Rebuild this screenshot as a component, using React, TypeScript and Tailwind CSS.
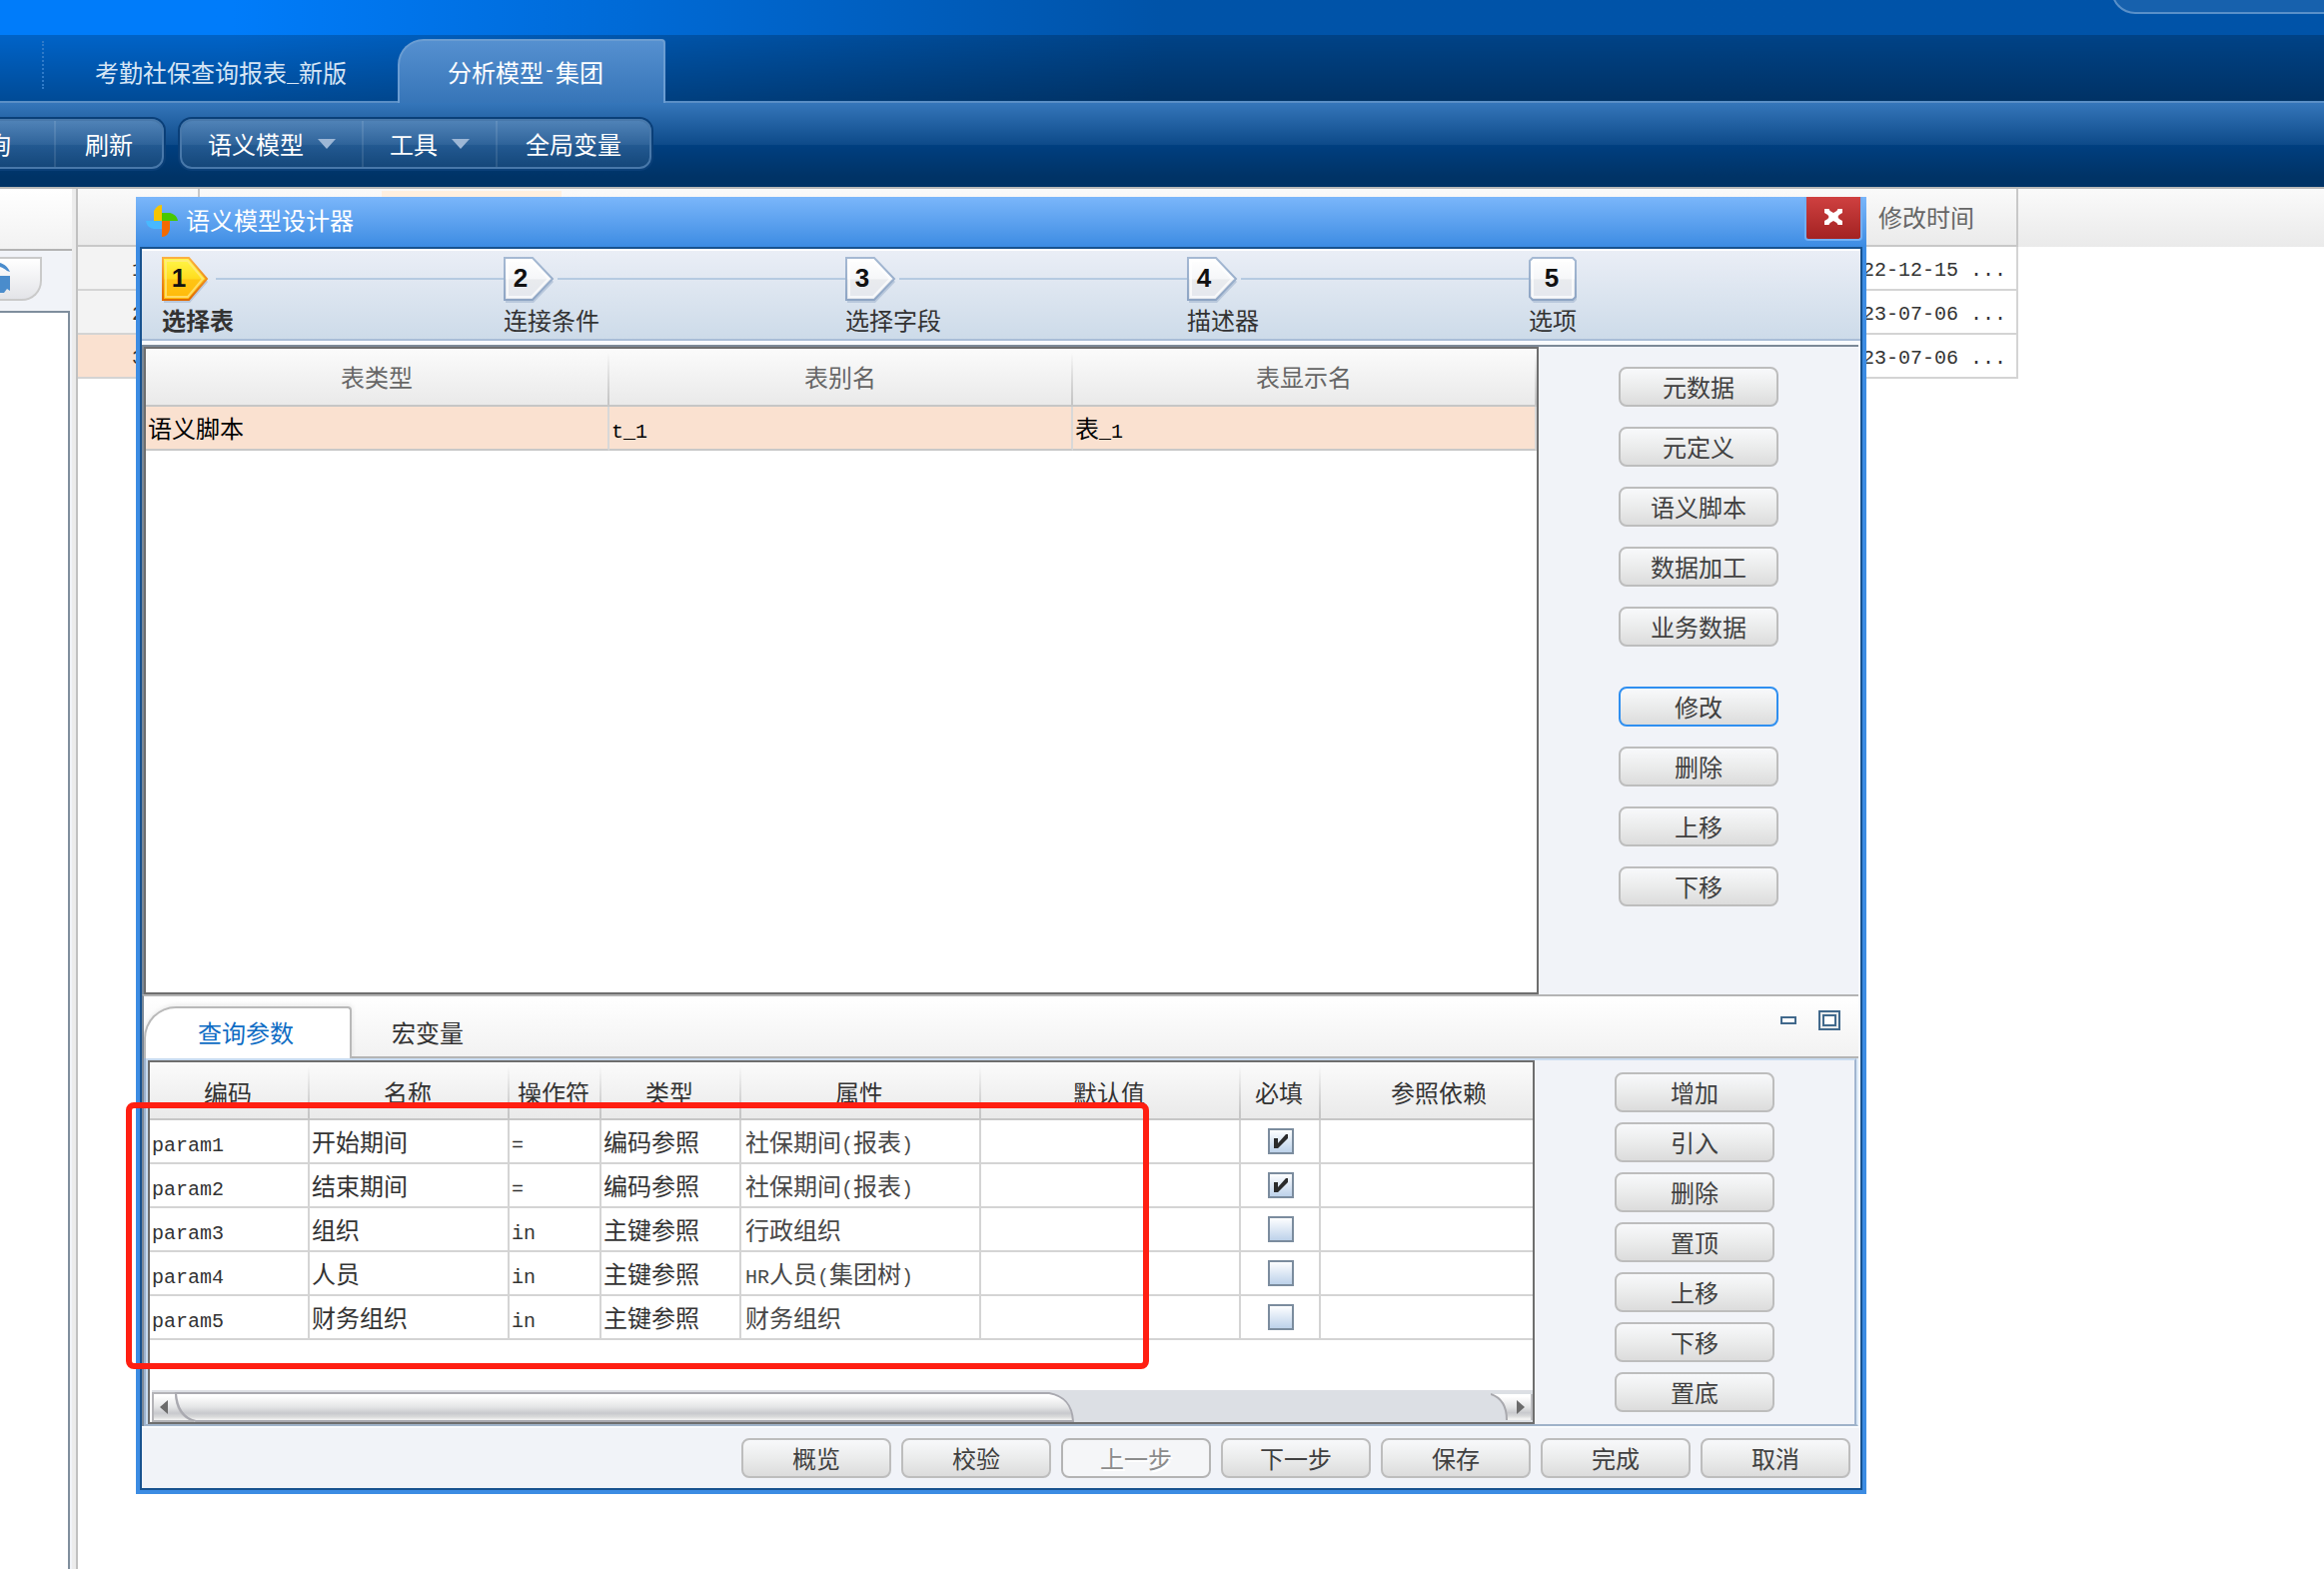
import { clsx } from "clsx";

type Param = {
  code: string;
  name: string;
  op: string;
  type: string;
  prop: string;
  required: boolean;
};

const params: Param[] = [
  { code: "param1", name: "开始期间", op: "=", type: "编码参照", prop: "社保期间(报表)", required: true },
  { code: "param2", name: "结束期间", op: "=", type: "编码参照", prop: "社保期间(报表)", required: true },
  { code: "param3", name: "组织", op: "in", type: "主键参照", prop: "行政组织", required: false },
  { code: "param4", name: "人员", op: "in", type: "主键参照", prop: "HR人员(集团树)", required: false },
  { code: "param5", name: "财务组织", op: "in", type: "主键参照", prop: "财务组织", required: false },
];

const paramColumns = [
  { label: "编码", width: "w-[160px]" },
  { label: "名称", width: "w-[200px]" },
  { label: "操作符", width: "w-[92px]" },
  { label: "类型", width: "w-[140px]" },
  { label: "属性", width: "w-[240px]" },
  { label: "默认值", width: "w-[260px]" },
  { label: "必填", width: "w-[80px]" },
  { label: "参照依赖", width: "w-[240px]" },
];

const steps = ["选择表", "连接条件", "选择字段", "描述器", "选项"];

const modelDates = ["2022-12-15 ...", "2023-07-06 ...", "2023-07-06 ..."];

const headCell =
  "h-[58px] border-r-2 border-b-2 font-normal [border-image:linear-gradient(to_bottom,transparent_10%,#c6c6c6_90%)_2]";

// Latin runs are set in a half-width mono face beside the full-width characters
function Mixed({ text }: { text: string }) {
  return (
    <>
      {text.split(/([\x20-\x7e]+)/).map((part, i) =>
        i % 2 === 1 ? (
          <span key={i} className="font-['Liberation_Mono',monospace] text-xl leading-none">
            {part}
          </span>
        ) : (
          part
        )
      )}
    </>
  );
}

function PushButton({ label, focused, disabled, wide = true }: { label: string; focused?: boolean; disabled?: boolean; wide?: boolean }) {
  return (
    <button
      type="button"
      disabled={disabled}
      className={clsx(
        "flex h-10 items-center justify-center rounded-lg border-2 leading-8",
        wide ? "w-40" : "w-[150px]",
        disabled
          ? "border-[#b4b4b4] bg-[#f5f6f8] text-[#8c8c8c] [text-shadow:2px_2px_0_#fff]"
          : "bg-linear-to-b from-[#f8f9fb] via-[#ebecec] to-[#dcdcdc] text-[#404040]",
        !disabled && (focused ? "border-[#2f8ff0]" : "border-[#bdbdbd]")
      )}
    >
      {label}
    </button>
  );
}

function Caret() {
  return (
    <svg width="18" height="10" viewBox="0 0 18 10" className="fill-[#9db7d6]">
      <path d="M0 0h18L9 10z" />
    </svg>
  );
}

function StepBadge({ index }: { index: number }) {
  const active = index === 1;
  const last = index === steps.length;
  const shape = last ? "M4 1h40l3 3v36l-3 3H4l-3-3V4z" : active ? "M1 1h26l18 21-18 21H1z" : "M1 1h28l20 21-20 21H1z";
  const inner = last ? "M4 4h40v36H4z" : active ? "M4 4h22l15 18-15 18H4z" : "M4 4h24l17 18-17 18H4z";
  return (
    <svg width="54" height="48" viewBox="0 0 54 48" className="shrink-0">
      <defs>
        <linearGradient id={`step${index}`} x1="0" y1="0" x2="0" y2="1">
          <stop offset="0" stopColor={active ? "#fff84a" : "#ffffff"} />
          <stop offset="0.5" stopColor={active ? "#ffdc1e" : "#f6f7f9"} />
          <stop offset="0.52" stopColor={active ? "#ffc414" : "#e9ebee"} />
          <stop offset="1" stopColor={active ? "#ffb90a" : "#e4e7ee"} />
        </linearGradient>
        <linearGradient id={`edge${index}`} x1="0" y1="0" x2="0" y2="1">
          <stop offset="0" stopColor={active ? "#fbb040" : "#a5b9d3"} />
          <stop offset="1" stopColor={active ? "#e06a00" : "#8ea5c4"} />
        </linearGradient>
      </defs>
      <path d={shape} transform="translate(1 3)" fill="#b9c8dc" />
      <path d={shape} fill={`url(#step${index})`} stroke={`url(#edge${index})`} strokeWidth="2" />
      <path d={inner} fill="none" stroke={active ? "#ffe98a" : "#ffffff"} strokeWidth="2" opacity="0.7" />
      <text
        x={last ? 23 : 17}
        y="30"
        textAnchor="middle"
        className="fill-[#111] font-['Liberation_Sans',sans-serif] text-[26px] font-bold"
      >
        {index}
      </text>
    </svg>
  );
}

function TopBar() {
  return (
    <header className="text-white">
      <div className="bg-linear-to-r from-[#007cfa] from-10% to-[#0053a8] to-50%">
        <div className="flex h-[35px] justify-end overflow-hidden">
          <div className="-mt-8 h-[46px] w-[213px] rounded-bl-[24px] border-b-2 border-l-2 border-[#5990c9] bg-[#1761ad]" />
        </div>
        <nav className="flex h-[68px] items-end border-b-2 border-[#5a8fc6] bg-linear-to-b from-black/20 to-black/40">
          <div className="mb-3 h-12 w-11 border-r-2 border-dotted border-[#2f7ac8]" />
          <a href="#report" className="-mb-0.5 flex h-16 w-[354px] items-center pt-[6px] pl-[51px] text-[#d6e5f5]">
            <span className="-mt-1">
              <Mixed text="考勤社保查询报表_新版" />
            </span>
          </a>
          <a
            href="#model"
            className="-mb-0.5 flex h-16 w-[268px] items-center justify-center rounded-tl-[26px] rounded-tr-sm border-2 border-b-0 border-[#6b9dd2] bg-linear-to-b from-[#5590d0] to-[#3675b8] pr-3"
          >
            <Mixed text="分析模型-集团" />
          </a>
        </nav>
      </div>
      <div className="flex h-[84px] items-start gap-4 overflow-hidden bg-[linear-gradient(#3576ba_0%,#0d4a89_50%,#003f80_50%,#003366_88%)] pt-4">
        <div className="-ml-[66px] flex h-[50px] rounded-xl border-2 border-[#4878aa] bg-linear-to-b from-white/20 to-white/8 shadow-[0_0_0_2px_#0a3f78]">
          <button type="button" className="w-[120px] border-r-2 border-white/10 pr-4 text-center">
            查询
          </button>
          <button type="button" className="w-[106px] text-center">
            刷新
          </button>
        </div>
        <div className="flex h-[50px] rounded-xl border-2 border-[#4878aa] bg-linear-to-b from-white/20 to-white/8 shadow-[0_0_0_2px_#0a3f78]">
          <button type="button" className="flex items-center gap-[14px] border-r-2 border-white/10 px-[26px]">
            语义模型
            <Caret />
          </button>
          <button type="button" className="flex items-center gap-[14px] border-r-2 border-white/10 px-[26px]">
            工具
            <Caret />
          </button>
          <button type="button" className="px-7">
            全局变量
          </button>
        </div>
      </div>
    </header>
  );
}

function SidePanel() {
  return (
    <aside className="flex w-[72px] shrink-0 flex-col bg-[#f1f3f8]">
      <div className="h-[62px] border-b-2 border-[#b3b3b3] bg-linear-to-b from-white to-[#f2f2f2]" />
      <div className="h-[60px] pt-[6px]">
        <button
          type="button"
          aria-label="刷新"
          className="block h-11 w-[42px] rounded-br-[20px] border-2 border-l-0 border-[#cacaca] bg-linear-to-b from-white to-[#e3e4e8]"
        >
          <svg width="12" height="36" viewBox="0 0 12 36" fill="#4a8ccc">
            <path d="M0 2c4 1 8 4 10 9l-3-1C5 8 3 7 0 6z" />
            <path d="M0 15h10v15l-3-2-3 4H0z" />
          </svg>
        </button>
      </div>
      <div className="mr-0.5 flex-1 border-t-2 border-r-2 border-[#7f8e9d] bg-white" />
    </aside>
  );
}

function ModelList() {
  const hidden = Array.from({ length: 8 });
  return (
    <table className="w-full table-fixed border-separate border-spacing-0 self-start">
      <thead>
        <tr className="bg-linear-to-b from-[#fafafa] to-[#eaeaea] text-[#666]">
          <th className="h-[58px] w-[122px] border-r-2 border-b-2 border-[#c8c8c8]" />
          {hidden.map((_, i) => (
            <th key={i} className="w-[182px] border-b-2 border-[#c8c8c8] p-0 pt-0.5 align-top">
              {i === 1 && <div className="h-6 w-[180px] bg-[#fff0e0]" />}
            </th>
          ))}
          <th className="w-[182px] border-b-2 border-[#c8c8c8]" />
          <th className="w-[182px] border-r-2 border-b-2 border-[#c8c8c8] text-center font-normal">修改时间</th>
          <th />
        </tr>
      </thead>
      <tbody>
        {modelDates.map((date, row) => (
          <tr key={row} className="text-[#333]">
            <td
              className={clsx(
                "h-11 border-r-2 border-b-2 border-[#d4d4d4] p-0 pb-1 text-center",
                row === 2 ? "bg-[#fae1d0]" : "bg-[#f3f3f3]"
              )}
            >
              <Mixed text={String(row + 1)} />
            </td>
            <td colSpan={9} className="border-b-2 border-[#d4d4d4]" />
            <td className="border-r-2 border-b-2 border-[#d4d4d4] p-0 pb-1 pl-0.5 whitespace-nowrap">
              <Mixed text={date} />
            </td>
            <td />
          </tr>
        ))}
      </tbody>
    </table>
  );
}

function TitleBar() {
  return (
    <div className="flex h-[50px] items-center bg-linear-to-b from-[#7ab6fa] to-[#3c8ce3] pr-1 pl-[10px] text-white">
      <svg width="32" height="32" viewBox="0 0 32 32" className="-mt-0.5">
        <path d="M16 0v16H8V6c2-3 4-6 8-6z" fill="#f6c400" />
        <path d="M16 8h8c4 1 7 3 8 8H16z" fill="#48c800" />
        <path d="M0 16h16v8H8c-5-1-7-3-8-8z" fill="#48b8ff" />
        <path d="M16 16h8v8c-1 5-4 8-8 8z" fill="#f26a00" />
      </svg>
      <h1 className="ml-2 flex-1 pb-1">语义模型设计器</h1>
      <button
        type="button"
        aria-label="关闭"
        className="flex h-11 w-[58px] items-center justify-center self-start rounded-b border-x-2 border-b-2 border-[#72aff3] bg-linear-to-b from-[#cf4040] to-[#a32222]"
      >
        <svg width="18" height="16" viewBox="0 0 16 16" preserveAspectRatio="none" fill="#fff" className="-mt-0.5">
          <path d="M0 0h4l1 2 3 2 3-2 1-2h4v4l-3 2-1 2 1 2 3 2v4h-4l-1-2-3-2-3 2-1 2H0v-4l3-2 1-2-1-2-3-2z" />
        </svg>
      </button>
    </div>
  );
}

function StepBar() {
  return (
    <ol className="flex border-t-2 border-b-2 border-t-white border-b-[#a9bdd7] bg-linear-to-b from-[#eaeef6] to-[#cddbe9] pt-[6px] pb-1 pl-5">
      {steps.map((step, i) => (
        <li
          key={step}
          className={clsx("text-[#333]", i === steps.length - 1 ? "w-[332px] shrink-0" : "flex-1")}
        >
          <div className="flex h-12">
            <StepBadge index={i + 1} />
            {i < steps.length - 1 && <div className="mt-[21px] h-0.5 flex-1 bg-[#b5cae1]" />}
          </div>
          <div className={clsx("h-[30px] leading-[30px]", i === 0 && "font-bold")}>{step}</div>
        </li>
      ))}
    </ol>
  );
}

function TableSection() {
  return (
    <section className="mt-1 mr-0.5 flex border-t-2 border-l-2 border-[#7c8997]">
      <div className="h-[648px] min-w-0 flex-1 border-2 border-[#6e6e6e] bg-white">
        <table className="w-full table-fixed border-separate border-spacing-0">
          <thead>
            <tr className="bg-linear-to-b from-[#fbfbfb] to-[#e9e9e9] text-[#666]">
              {["表类型", "表别名", "表显示名"].map((label) => (
                <th key={label} className={clsx(headCell, "text-center")}>
                  {label}
                </th>
              ))}
            </tr>
          </thead>
          <tbody>
            <tr className="bg-[#fae1d0] text-black">
              {["语义脚本", "t_1", "表_1"].map((cell) => (
                <td key={cell} className="h-11 border-r-2 border-b-2 border-r-[#d8d8d8] border-b-[#c8c8c8] p-0 pl-0.5">
                  <Mixed text={cell} />
                </td>
              ))}
            </tr>
          </tbody>
        </table>
      </div>
      <div className="flex w-80 flex-col items-center gap-5 bg-[#f1f3f8] pt-5">
        {["元数据", "元定义", "语义脚本", "数据加工", "业务数据"].map((label) => (
          <PushButton key={label} label={label} />
        ))}
        <div />
        {["修改", "删除", "上移", "下移"].map((label) => (
          <PushButton key={label} label={label} focused={label === "修改"} />
        ))}
      </div>
    </section>
  );
}

function ScrollBar() {
  return (
    <div className="mt-auto ml-0.5 flex h-8 shrink-0 bg-[#dcdfe4]">
      <svg width="923" height="32" viewBox="0 0 923 32">
        <defs>
          <linearGradient id="thumb" x1="0" y1="0" x2="0" y2="1">
            <stop offset="0.1" stopColor="#ffffff" />
            <stop offset="0.5" stopColor="#e4e5e6" />
            <stop offset="0.72" stopColor="#c8c9cd" />
            <stop offset="0.85" stopColor="#dadbdb" />
            <stop offset="0.95" stopColor="#f2f2f2" />
          </linearGradient>
        </defs>
        <path d="M1 3h23c0 14 6 24 18 28H1z" fill="url(#thumb)" stroke="#b4b4b8" strokeWidth="2" />
        <path d="M24 3h874c16 3 23 12 24 28H44C32 28 25 18 24 3z" fill="url(#thumb)" stroke="#a9a9b0" strokeWidth="2" />
        <path d="M16 10v14l-8-7z" fill="#6b6b6b" />
      </svg>
      <svg width="42" height="32" viewBox="0 0 42 32" className="ml-auto">
        <path d="M0 4h40v26H16C16 18 12 8 0 4z" fill="url(#thumb)" />
        <path d="M0 4c12 4 16 14 16 26" fill="none" stroke="#a9a9ae" strokeWidth="2" />
        <path d="M40 4h2v26h-2z" fill="#bcbcc0" />
        <path d="M26 10v14l8-7z" fill="#6b6b6b" />
      </svg>
    </div>
  );
}

function ParamTable() {
  const cell = "h-11 border-r-2 border-b-2 border-[#d4d4d4] p-0 pl-0.5 whitespace-nowrap";
  return (
    <div className="flex min-w-0 flex-1 flex-col overflow-hidden border-2 border-[#6e6e6e] bg-white">
      <table className="w-[1412px] table-fixed border-separate border-spacing-0 text-[#333]">
        <thead>
          <tr className="bg-linear-to-b from-[#fbfbfb] to-[#e9e9e9]">
            {paramColumns.map((col) => (
              <th key={col.label} className={clsx(headCell, col.width, "p-0 pt-1 pr-0.5 text-center")}>
                {col.label}
              </th>
            ))}
          </tr>
        </thead>
        <tbody>
          {params.map((p) => (
            <tr key={p.code}>
              <td className={cell}>
                <Mixed text={p.code} />
              </td>
              <td className={cell}>{p.name}</td>
              <td className={cell}>
                <Mixed text={p.op} />
              </td>
              <td className={cell}>{p.type}</td>
              <td className={clsx(cell, "text-[#484848]")}>
                <span className="ml-0.5">
                  <Mixed text={p.prop} />
                </span>
              </td>
              <td className={cell} />
              <td className={clsx(cell, "align-middle")}>
                <span className="relative mx-auto block size-[26px]">
                  <input
                    type="checkbox"
                    defaultChecked={p.required}
                    aria-label={`${p.name} 必填`}
                    className="peer block size-[26px] appearance-none border-2 border-[#7b8c9e] bg-linear-to-b from-[#fdfeff] to-[#bdd2ea]"
                  />
                  <svg
                    viewBox="0 0 26 26"
                    className="pointer-events-none absolute inset-0 hidden fill-[#2b2b2b] peer-checked:block"
                  >
                    <path d="M6 10h4v5L18 6h2v4L10 20H6z" />
                  </svg>
                </span>
              </td>
              <td className={cell} />
            </tr>
          ))}
        </tbody>
      </table>
      <ScrollBar />
    </div>
  );
}

function ParamSection() {
  return (
    <section className="mr-0.5 border-t-2 border-l-2 border-t-[#b4b4b4] border-l-[#7c8997]">
      <div className="flex h-[62px] items-end border-b-2 border-[#b4b4b4] bg-linear-to-b from-white to-[#f2f2f2]">
        <button
          type="button"
          className="-mb-0.5 h-[52px] w-[208px] rounded-tl-[32px] rounded-tr border-2 border-b-0 border-[#b9b9b9] bg-white pr-1 pb-0.5 text-[#0e6cc4] shadow-[1px_-2px_4px_#0001]"
        >
          查询参数
        </button>
        <button type="button" className="-mb-0.5 h-[52px] px-10 text-[#333]">
          宏变量
        </button>
        <div className="mr-[18px] ml-auto flex items-center gap-[22px] self-start pt-[14px]">
          <button type="button" aria-label="最小化" className="h-2 w-4 border-2 border-[#41698c] bg-white" />
          <button
            type="button"
            aria-label="最大化"
            className="flex h-5 w-[22px] items-center justify-center border-2 border-[#41698c] bg-[#e8eaec]"
          >
            <span className="h-3 w-[14px] border-2 border-[#41698c] bg-white" />
          </button>
        </div>
      </div>
      <div className="border-r-2 border-b-2 border-l-2 border-r-[#dceaf8] border-b-[#9fb2c9] border-l-[#9db3cf]">
        <div className="flex h-[366px] border-t-2 border-r-2 border-l-2 border-t-[#c8dbf0] border-r-[#a0b4cf] border-l-[#c8dbf0] bg-[#f1f3f8]">
          <ParamTable />
          <div className="flex w-80 flex-col items-center gap-[10px] pt-3">
            {["增加", "引入", "删除", "置顶", "上移", "下移", "置底"].map((label) => (
              <PushButton key={label} label={label} />
            ))}
          </div>
        </div>
      </div>
    </section>
  );
}

function DesignerDialog() {
  return (
    <div
      role="dialog"
      aria-label="语义模型设计器"
      className="absolute top-2 right-[458px] left-[136px] bg-[#3c8ce3]"
    >
      <TitleBar />
      <div className="mx-1 border-2 border-[#17528f] bg-[#f8fafd]">
        <StepBar />
        <TableSection />
        <ParamSection />
        <div className="mt-0.5 flex justify-end gap-[10px] bg-[#f1f3f8] p-[10px]">
          {["概览", "校验", "上一步", "下一步", "保存", "完成", "取消"].map((label) => (
            <PushButton key={label} label={label} wide={false} disabled={label === "上一步"} />
          ))}
        </div>
      </div>
      <div className="h-1" />
      {/* highlight frame over the query parameters */}
      <div className="pointer-events-none absolute top-[906px] -left-[10px] h-[267px] w-[1024px] rounded-lg border-[6px] border-[#ff1f12]" />
    </div>
  );
}

export default function App() {
  return (
    <div className="flex min-h-screen flex-col overflow-hidden bg-white font-['Noto_Sans_CJK_SC',sans-serif] text-2xl leading-8">
      <TopBar />
      <main className="relative flex flex-1 border-t-2 border-[#b9b9b9]">
        <SidePanel />
        <div className="w-[6px] shrink-0 border-r-2 border-[#c0c0c0] bg-[#ececec]" />
        <ModelList />
        <DesignerDialog />
      </main>
    </div>
  );
}
